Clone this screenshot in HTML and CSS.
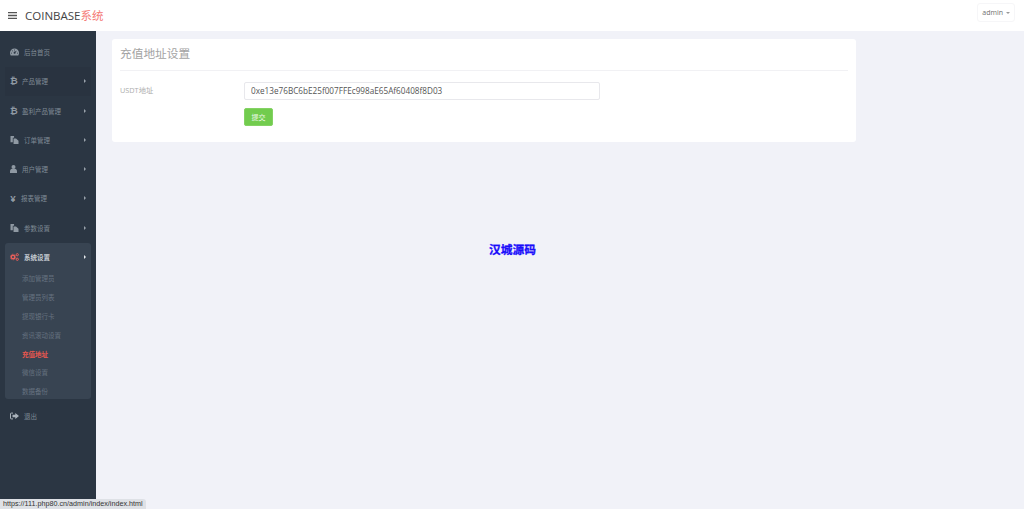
FILE: index.html
```html
<!DOCTYPE html>
<html lang="zh">
<head>
<meta charset="utf-8">
<title>COINBASE系统</title>
<link rel="stylesheet" href="styles.css">
</head>
<body>
<header class="topbar">
  <div class="brand">
    <svg class="burger" viewBox="0 0 9 7" width="9" height="7"><path d="M0 0h9v1.300H0zM0 2.850h9v1.300H0zM0 5.700h9V7H0z" fill="#555"/></svg>
    <span class="logo">COINBASE<em>系统</em></span>
  </div>
  <div class="user">admin<i class="caret"></i></div>
</header>
<div class="body">
  <aside class="sidebar">
    <ul class="menu">
      <li class="item"><svg class="ic" viewBox="0 0 9 7"><path fill-rule="evenodd" d="M4.500 0A4.500 4.500 0 0 0 0 4.500c0 1 .3 1.800.7 2.500h7.600c.4-.7.700-1.500.700-2.500A4.500 4.500 0 0 0 4.500 0zM4.100 1h.8v1h-.8zM1.700 2.300l.6-.5.6.6-.5.6zM1 4.200h1v.7H1zM7 4.200h1v.7H7zM5 3.200l1.200-1 .4.400-1 1.300a1 1 0 1 1-.6-.7z" fill="#8f99a3"/></svg><span>后台首页</span></li>
      <li class="item hov"><span class="g">₿</span><span>产品管理</span><i class="arrow"></i></li>
      <li class="item"><span class="g">₿</span><span>盈利产品管理</span><i class="arrow"></i></li>
      <li class="item"><svg class="ic" viewBox="0 0 9 9"><path d="M0 0h4v2H2.600v5H0zM3.400 2.800h2.800L9 5.300V9H3.400z" fill="#8f99a3"/></svg><span>订单管理</span><i class="arrow"></i></li>
      <li class="item narrow"><svg class="ic" viewBox="0 0 7 8"><circle cx="3.500" cy="2" r="2" fill="#8f99a3"/><path d="M0 8V6.300C0 4.800 1 3.800 2 3.800h3c1 0 2 1 2 2.500V8z" fill="#8f99a3"/></svg><span>用户管理</span><i class="arrow"></i></li>
      <li class="item"><span class="g yen">¥</span><span>报表管理</span><i class="arrow"></i></li>
      <li class="item"><svg class="ic" viewBox="0 0 9 9"><path d="M0 0h4v2H2.600v5H0zM3.400 2.800h2.800L9 5.300V9H3.400z" fill="#8f99a3"/></svg><span>参数设置</span><i class="arrow"></i></li>
      <li class="group">
        <div class="item open"><svg class="ic" viewBox="0 0 9 8"><circle cx="3" cy="4" r="1.800" fill="none" stroke="#e9605c" stroke-width="1.400"/><circle cx="3" cy="4" r="2.800" fill="none" stroke="#e9605c" stroke-width=".7" stroke-dasharray=".9 .8"/><circle cx="7.300" cy="1.700" r="1.100" fill="none" stroke="#e9605c" stroke-width="1"/><circle cx="7.300" cy="6.300" r="1.100" fill="none" stroke="#e9605c" stroke-width="1"/></svg><span>系统设置</span><i class="arrow"></i></div>
        <ul class="sub">
          <li>添加管理员</li>
          <li>管理员列表</li>
          <li>提现银行卡</li>
          <li>资讯滚动设置</li>
          <li class="on">充值地址</li>
          <li>微信设置</li>
          <li>数据备份</li>
        </ul>
      </li>
      <li class="item out"><svg class="ic" viewBox="0 0 9 7"><path d="M3 .6H1.200a.7.700 0 0 0-.7.700v4.400a.7.700 0 0 0 .7.700H3" fill="none" stroke="#a9b2bb" stroke-width="1"/><path d="M2.500 2.300h2.800V.6L9 3.500 5.300 6.400V4.700H2.500z" fill="#a9b2bb"/></svg><span>退出</span></li>
    </ul>
  </aside>
  <main class="content">
    <section class="card">
      <h1 class="title">充值地址设置</h1>
      <form class="form">
        <label class="label" for="addr">USDT地址</label>
        <div class="fields">
          <input class="input" id="addr" value="0xe13e76BC6bE25f007FFEc998aE65Af60408f8D03">
          <button class="btn" type="button">提交</button>
        </div>
      </form>
    </section>
    <p class="mark">汉城源码</p>
  </main>
</div>
<div class="status">https://111.php80.cn/admin/index/index.html</div>
</body>
</html>
```
FILE: styles.css
```css
* { box-sizing: border-box; }
html, body { height: 100%; }
body {
  margin: 0;
  height: 509px;
  overflow: hidden;
  display: flex;
  flex-direction: column;
  background: #f1f2f8;
  font-family: "Open Sans", "Noto Sans CJK SC", sans-serif;
  color: #6c757d;
}
ul { list-style: none; margin: 0; padding: 0; }
.topbar {
  flex: 0 0 31px;
  background: #fff;
  display: flex;
  align-items: flex-start;
  justify-content: space-between;
  padding: 3px 9px 0 8px;
}
.brand { display: flex; align-items: center; gap: 8px; height: 24px; }
.burger { display: block; }
.logo { font-size: 11.500px; color: #444; }
.logo em { font-style: normal; color: #f47a75; }
.user {
  height: 19px;
  padding: 0 4px;
  border: 1px solid #f6f6f8;
  border-radius: 3px;
  display: flex;
  align-items: center;
  gap: 3px;
  font-size: 7px;
  color: #6f6f6f;
}
.caret {
  width: 0; height: 0;
  border: 2px solid transparent;
  border-top-color: #999;
  border-bottom: 0;
}
.body { flex: 1; display: flex; min-height: 0; }
.sidebar {
  flex: 0 0 96px;
  background: #2b3643;
  padding: 6.300px 5px 0;
  color: #7f8a95;
  font-size: 6.500px;
}
.item {
  height: 29.300px;
  display: flex;
  align-items: center;
  padding: 0 0 0 5px;
  position: relative;
}
.hov { background: #293340; }
.ic { width: 9px; height: 8px; margin-right: 5px; flex: none; }
.narrow .ic { width: 7px; }
.g { width: 7px; margin-right: 5px; font-size: 9.500px; font-weight: 700; line-height: 1; text-align: center; color: #8f99a3; }
.yen { width: 6px; }
.arrow {
  position: absolute;
  right: 5px;
  top: 50%;
  margin-top: -2px;
  border: 2px solid transparent;
  border-left-color: #99a2ab;
  border-right: 0;
}
.group {
  margin-top: 1px;
  background: #384452;
  border-radius: 3px;
  height: 156px;
}
.open { color: #c6ccd3; font-weight: 700; height: 27px; }
.open .arrow { border-left-color: #e6e9ec; }
.sub { padding-left: 17px; color: #667280; }
.sub li { height: 18.800px; line-height: 18.800px; }
.sub .on { color: #e8574f; font-weight: 700; }
.out { margin-top: 2px; }
.content { flex: 1; padding: 8px 16px; min-width: 0; display: flex; flex-direction: column; }
.card {
  width: 744px;
  height: 103px;
  background: #fff;
  border-radius: 3px;
  padding: 0 8px;
}
.title {
  margin: 0;
  height: 32px;
  line-height: 29px;
  font-size: 11.700px;
  font-weight: 400;
  color: #a3a3a3;
  border-bottom: 1px solid #f1f1f4;
}
.form { display: flex; padding-top: 11px; }
.label { flex: 0 0 124px; font-size: 7.300px; color: #adadad; line-height: 17px; }
.fields { display: flex; flex-direction: column; align-items: flex-start; gap: 8px; }
.input {
  width: 356px;
  height: 18px;
  padding: 0 6px 2px;
  border: 1px solid #e8e8ec;
  border-radius: 2px;
  font: 8.200px "Open Sans", sans-serif;
  color: #555;
  background: #fff;
}
.btn {
  width: 29px;
  height: 18px;
  padding: 0;
  border: 1px solid #84d264;
  border-radius: 2px;
  background: #72cc4e;
  color: #eef9e9;
  font: 7px "Noto Sans CJK SC", sans-serif;
}
.mark {
  margin: 98px 0 0;
  text-align: center;
  width: 801px;
  font-size: 11.700px;
  font-weight: 700;
  color: #1a0dfb;
  font-family: "Noto Sans CJK SC", sans-serif;
  -webkit-text-stroke: .3px #1a0dfb;
}
.status {
  position: absolute;
  left: 0;
  bottom: 0;
  height: 10px;
  padding: 0 3px;
  background: #dee1e6;
  border-top-right-radius: 3px;
  font: 7.200px/10px "Liberation Sans", sans-serif;
  color: #333;
}
```
